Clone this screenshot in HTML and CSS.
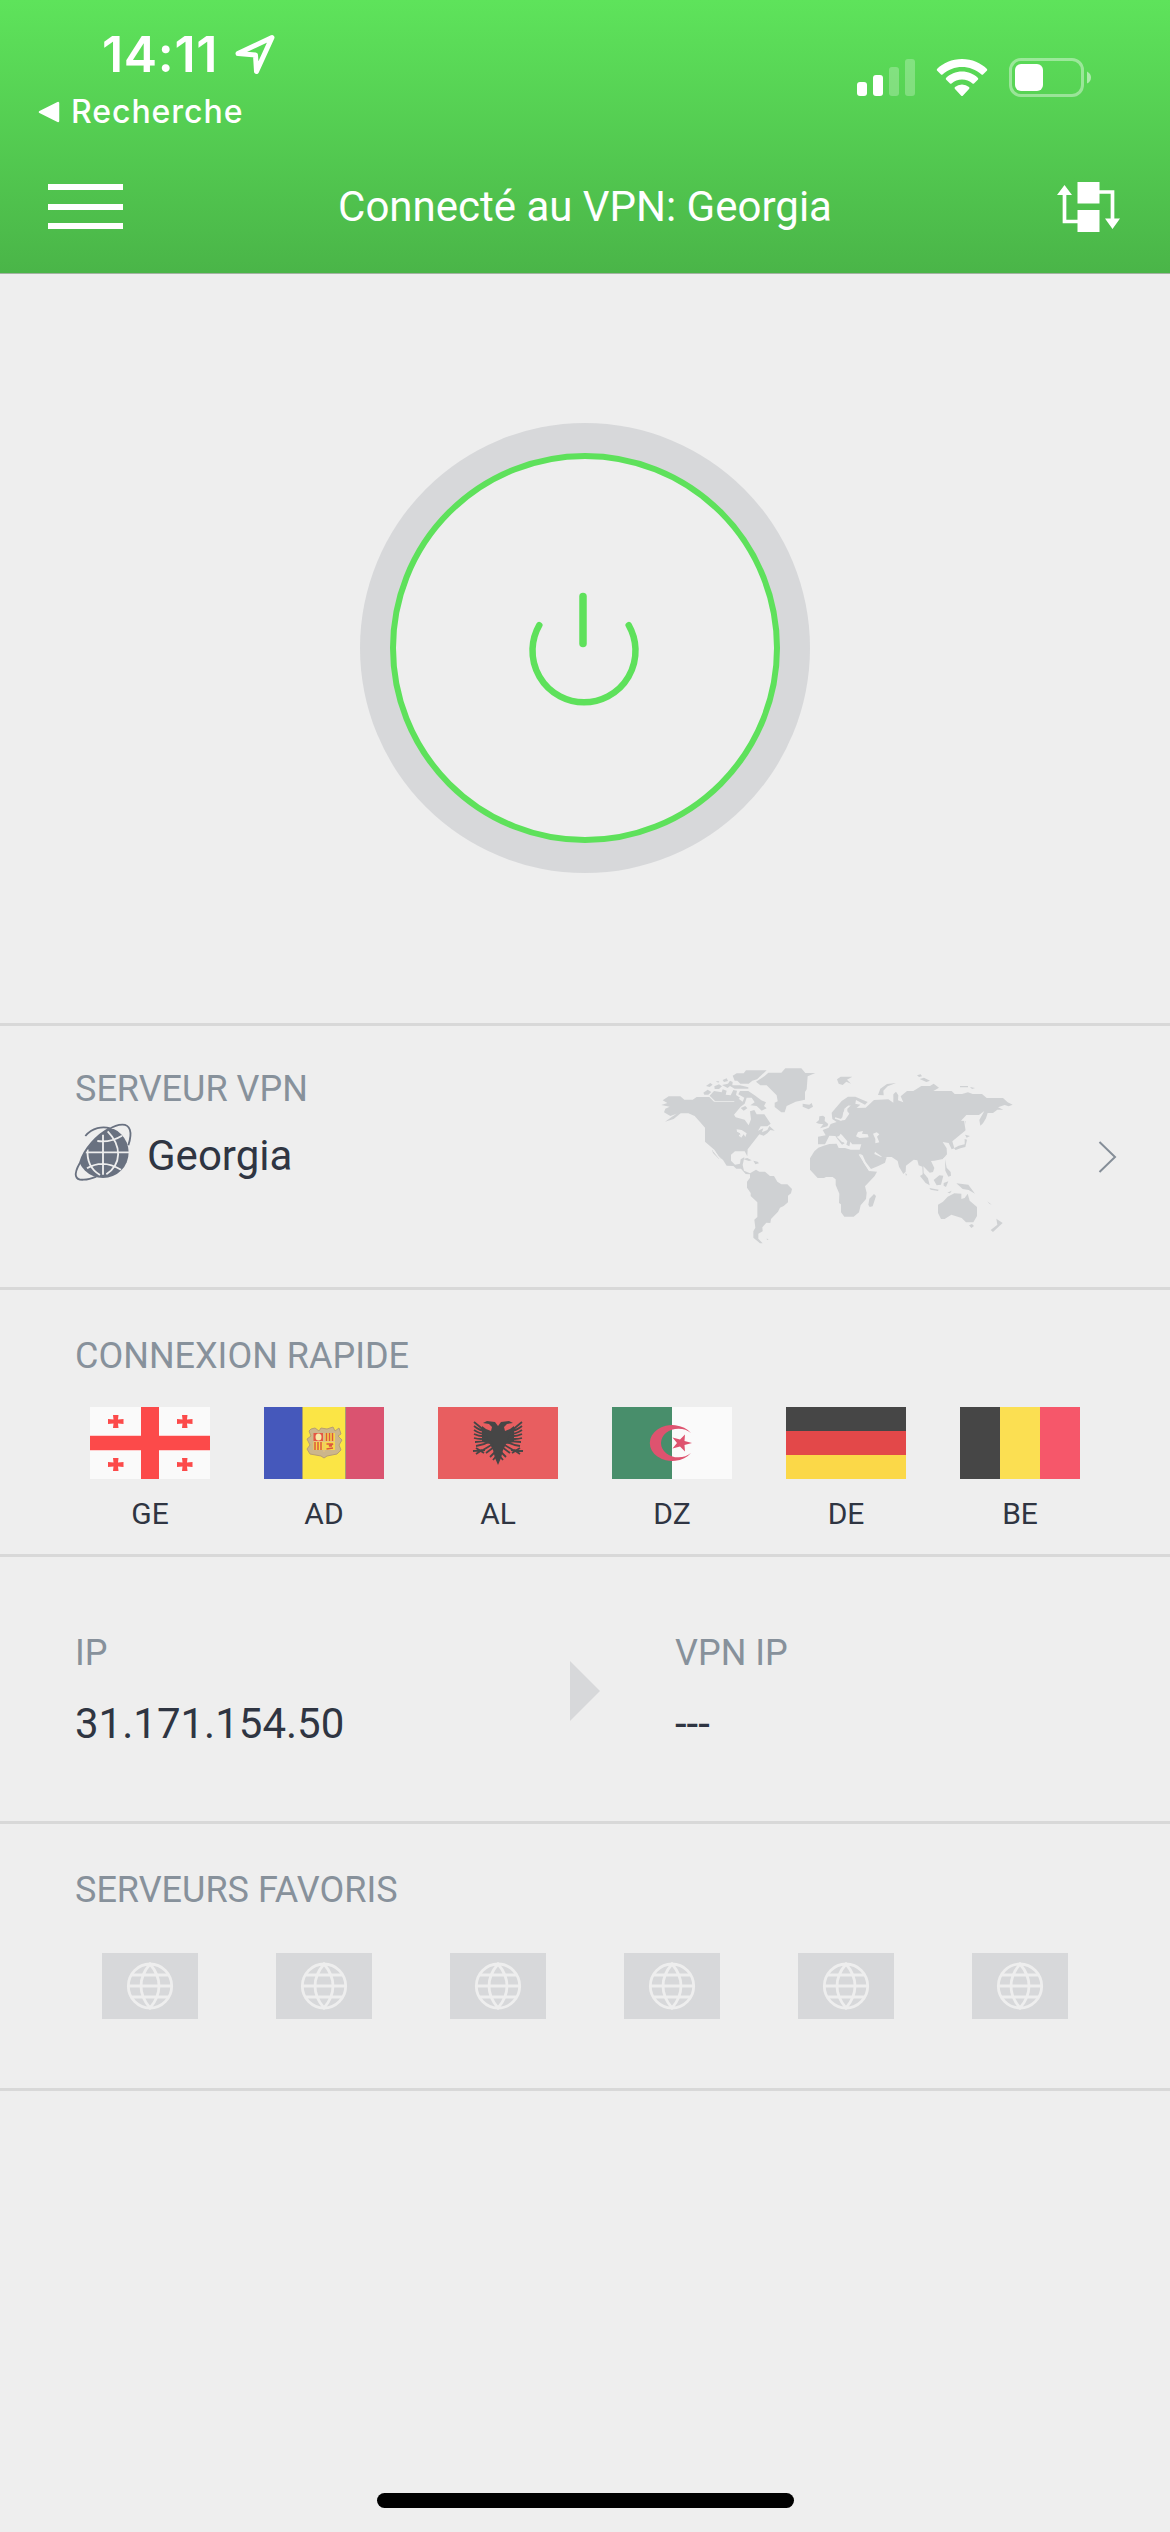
FILE: index.html
```html
<!DOCTYPE html>
<html lang="fr">
<head>
<meta charset="utf-8">
<title>VPN</title>
<link rel="stylesheet" href="styles.css">
</head>
<body>
<svg class="defs" width="0" height="0" aria-hidden="true">
  <symbol id="globe" viewBox="0 0 48 48">
    <g fill="none" stroke="#eee" stroke-width="2.8">
      <ellipse cx="24" cy="24" rx="21.7" ry="22"/>
      <path d="M2 24H46M6 13H42M6 35H42M24 2C12 16 12 32 24 46C36 32 36 16 24 2Z"/>
    </g>
  </symbol>
</svg>
<header class="header">
  <div class="status">
    <div class="status-left">
      <div class="clock"><span class="time">14:11</span>
        <svg class="location" width="42" height="42" viewBox="0 0 42 42"><path d="M4 19.500L38 3.500L22.500 37.500L21.500 21Z" fill="none" stroke="#fff" stroke-width="5" stroke-linejoin="round"/></svg>
      </div>
      <div class="back">
        <svg width="22" height="22" viewBox="0 0 22 22"><path d="M2 11L20 2V20Z" fill="#fff" stroke="#fff" stroke-width="2.500" stroke-linejoin="round"/></svg>
        <span>Recherche</span>
      </div>
    </div>
    <div class="status-right">
      <svg width="58" height="38" viewBox="0 0 58 38" fill="#fff"><rect y="23" width="10" height="14" rx="3"/><rect x="16" y="16" width="10" height="21" rx="3"/><rect x="32" y="8" width="10" height="29" rx="3" opacity=".25"/><rect x="48" width="10" height="37" rx="3" opacity=".25"/></svg>
      <svg width="52" height="38" viewBox="0 0 52 38" fill="#fff"><path d="M26 0C36 0 45 4 51 10Q51.500 11 51 11.500L47 15.500Q46.500 16 45.500 15.500C40 10.500 33 8 26 8S12 10.500 6.500 15.500Q5.500 16 5 15.500L1 11.500Q.5 11 1 10C7 4 16 0 26 0Z"/><path d="M26 12.500C32 12.500 38 15 42 19Q42.500 20 42 20.500L38 24.500Q37 25 36.500 24.500C33.500 22 30 20.500 26 20.500S18.500 22 15.500 24.500Q15 25 14 24.500L10 20.500Q9.500 20 10 19C14 15 20 12.500 26 12.500Z"/><path d="M26 25.500Q30 25.500 33 28Q34 29 33 30L27 36.500Q26 37.500 25 36.500L19 30Q18 29 19 28Q22 25.500 26 25.500Z"/></svg>
      <svg width="83" height="40" viewBox="0 0 83 40"><rect x="1.500" y="0.500" width="72" height="36" rx="10.500" fill="none" stroke="#fff" stroke-opacity=".4" stroke-width="3"/><rect x="6" y="5" width="28" height="27" rx="6" fill="#fff"/><path d="M78 12.500Q82 14.500 82 18.500T78 24.500Z" fill="#fff" opacity=".5"/></svg>
    </div>
  </div>
  <div class="navbar">
    <div class="menu"><i></i><i></i><i></i></div>
    <h1 class="title">Connecté au VPN: Georgia</h1>
    <svg width="63" height="50" viewBox="0 0 63 50" fill="#fff"><path d="M20.500 0H42.500V21.500H20.500ZM20.500 28H42.500V50H20.500ZM0 13L7.500 3L15 13ZM48 36.500H63L55.500 47Z"/><path d="M42 10H55.500V38M21 39.500H7.500V12" fill="none" stroke="#fff" stroke-width="3.700"/></svg>
  </div>
</header>
<main>
  <section class="hero">
    <div class="power"><div class="power-inner">
      <svg width="114" height="120" viewBox="527 590 114 120" fill="none" stroke="#5ee15b" stroke-linecap="round"><path d="M583 596.500V643.500" stroke-width="7.500"/><path d="M539.300 625.200A51.500 51.500 0 1 0 628.700 625.200" stroke-width="6.500"/></svg>
    </div></div>
  </section>
  <section class="server">
    <div class="server-info">
      <h2 class="label">SERVEUR VPN</h2>
      <div class="server-name">
        <svg width="58" height="58" viewBox="0 0 174 174"><defs><clipPath id="ball"><path d="M15 116C18 105 24 93 32 81C46 60 72 30 100 14H174V174H20Z"/></clipPath></defs>
          <circle cx="84" cy="85" r="77" fill="#697180" clip-path="url(#ball)"/>
          <g fill="none" stroke="#eee" stroke-width="5.500"><path d="M84 32V152M32 85H164M67 51Q107 56 141 35M36 133Q84 104 138 137M98 22C141 66 140 120 94 151M38 76C35 112 50 138 75 153"/></g>
          <path d="M31 36C52 11 82 6 106 13M15 116C-6 152 0 169 26 167C40 167 52 163 64 158M102 16C118 5 132 2 142 2C164 2 174 22 160 64M15 116C26 76 66 32 104 13" fill="none" stroke="#697180" stroke-width="5.500"/>
        </svg>
        <span class="value">Georgia</span>
      </div>
    </div>
    <svg class="map" width="400" height="210" viewBox="0 0 1200 630">
      <g fill="#cfd1d3">
        <path d="M64 165L82 159L68 151L86 139H121L133 149H158L170 141H208L222 155H282L292 143L308 155L313 143L295 133L300 123H325L346 137L364 151L378 157L372 168L380 175L365 182L350 168L331 166L344 157L335 143H320L314 161L302 170L282 194L287 202L314 209L326 226L333 208L330 184L343 180L350 193H373L392 221L382 229H362L354 242L370 235L366 247L382 240L388 228L404 242L391 240L382 250L371 257L358 253L340 276L323 298L322 319L314 304H285L273 314V332L285 344L300 341L302 328L313 322L308 345L312 362L330 370L348 359L358 365H375L390 378H402L412 395L424 403H442L456 417L453 430L444 437V457L431 468L420 473L414 485L393 507L391 519L379 518L367 532L368 544L355 551V566L368 580H360L340 563V544L346 533L343 509L352 501V457L332 438V429L321 413V395L330 383V373L317 372L303 356H289L280 348L260 347L249 330L236 319L223 299L195 275V233L180 216L164 198L145 190H122L101 207L75 215L96 200L110 191L91 198L72 187L76 176L89 170Z"/>
        <path d="M278 77L290 70H311L318 61H380L351 88L337 92L326 101H301L292 92H284ZM348 95L373 79L385 68H424L436 55H484L496 69H526L503 79L500 118L495 126V149L467 155L440 168L434 187H424L404 171V158L413 154L410 136L380 106H361Z"/>
        <path d="M190 128L203 119L214 126L205 134H193ZM198 108L211 99L218 104L209 111ZM209 137L222 123L245 127L248 118L260 122L257 134L272 136L280 120L291 122L288 135L300 143L288 153H225ZM223 109L237 103L246 109L237 117H224ZM227 94H238L235 98ZM248 90L260 85L264 93L252 96ZM246 105L264 101L270 92L278 96L277 106H300L325 112V116H284L270 108L263 114ZM302 174L316 168L322 175L311 182Z"/>
        <path d="M591 88L602 80H637L621 89L633 101L619 95L608 105L596 101ZM488 161L508 164L515 159L519 170L506 178L488 170ZM528 218L537 210L538 199L549 197L555 202L554 213L565 222L562 229L540 235L550 223L537 221ZM714 135L721 116L741 102L768 99L743 109L730 122L731 136ZM831 76L842 73L846 79L837 81ZM839 87L852 83L870 92L859 96ZM960 108H984V112H960ZM990 111L1005 114L996 117Z"/>
        <path d="M548 240L566 233L572 222L590 216L577 207L575 188L605 153L624 140H646L683 156L675 164L648 150L646 161L661 164L650 174L677 173L702 150L745 148L760 158V133L768 125L775 136L774 151L790 157L782 139L801 123H820L844 108H870L881 101L897 113L880 123H935L944 132H966L984 127L998 132H1026L1040 144H1089L1103 157L1118 164L1106 169L1094 165L1074 172L1090 179H1072L1059 189H1043L1038 205L1029 220L1021 227L1018 210L1033 183L1017 195H979L963 212L978 213V240L937 274L943 295L935 298L926 279L908 276L920 295L921 313L909 327L883 332L873 333L883 354L879 366L869 368L850 349L851 369L864 385L869 406L857 399L840 378L848 373L847 350L836 346L832 331L821 329L798 347L797 365L790 372L777 350L773 333L755 321H727L705 305L703 312L721 320L740 322L735 338L715 348L693 357L677 336L668 316L660 311L672 340L688 363L711 365L704 378L675 409L680 428L678 447L662 466L657 487L641 500H613L603 487V463L597 459L598 431L587 405V388L578 381H558L552 384H533L510 359V325L523 304L535 293L551 287L568 282L590 281L596 294L615 294L632 299H659L664 283H637L631 275L628 289L619 284L622 274L608 257L602 251L597 259L614 280L606 284L593 268L586 258L568 257L555 283H534V260L557 256Z"/>
        <path d="M685 464L688 446L702 432L708 438L698 469L689 471ZM796 370L801 373L798 378ZM881 390L898 376L910 377L903 404L890 406ZM911 399L925 394L918 411L911 407ZM868 414L896 419L894 423L872 419ZM922 428L935 422L930 430ZM915 328L920 353L932 366L933 377L925 380L916 362ZM949 400L985 404L1005 431L986 420L968 417ZM894 464L909 455L923 440L943 430L964 431L964 447L974 444L983 431L989 452L1011 471V498L1000 517H978L965 504L934 494L914 507H903L894 489ZM987 526L996 522L1002 528L994 534ZM1042 454L1055 464L1048 461ZM1069 506L1079 513L1088 519L1079 527L1059 546L1052 540L1072 524ZM942 295L956 287L974 283V267L981 269L976 291L961 295L947 300ZM975 254L990 258L980 263ZM340 332L353 335L357 340L346 343ZM309 327L322 324L335 331L327 333ZM379 566L386 567L382 570ZM216 299L242 326L237 327L219 309Z"/>
      </g>
      <g fill="none" stroke="#eee" stroke-width="4"><path d="M628 167L615 177L613 193L624 192M605 210L585 204M160 211L190 237M974 211L979 243M658 313L689 363M220 302L241 328M298 255L302 260M910 327L920 321"/></g>
      <g fill="#eee"><path d="M610 187L620 171L633 165L622 176V184L628 191L615 210L598 212L607 202ZM648 259L654 246L669 243L666 251L683 253L686 262L659 264ZM699 251L710 247L718 253L711 260L718 277L706 280L706 267ZM290 238L305 240L320 250L316 261L311 253L303 264L300 250L291 245ZM590 260L600 257L616 278L606 276Z"/></g>
    </svg>
    <svg class="chevron" width="20" height="34" viewBox="0 0 20 34"><path d="M1.500 2L17 17L1.500 32" fill="none" stroke="#858e98" stroke-width="2"/></svg>
  </section>
  <section class="quick">
    <h2 class="label">CONNEXION RAPIDE</h2>
    <div class="tiles">
      <div class="tile"><svg width="120" height="72" viewBox="0 0 120 72"><path fill="#fafafa" d="M0 0H120V72H0Z"/><path fill="#ffcfcf" d="M0 28H120V44H0Z"/><path fill="#fc4a4a" d="M51 0H69V29H120V43H69V72H51V43H0V29H51Z"/><path id="ge-cross" fill="#fc4a4a" d="M23 8H28.500L28 12.500L33.500 12V17L28 16.500L28.500 21H23L23.500 16.500L18 17V12L23.500 12.500Z"/><use href="#ge-cross" x="69"/><use href="#ge-cross" y="43"/><use href="#ge-cross" x="69" y="43"/></svg><span>GE</span></div>
      <div class="tile"><svg width="120" height="72" viewBox="0 0 120 72"><path fill="#4558bb" d="M0 0H38.500V72H0Z"/><path fill="#fbe545" d="M38.500 0H82V72H38.500Z"/><path fill="#da5370" d="M82 0H120V72H82Z"/><path stroke="#a89d70" d="M38.500 0V72M81.500 0V72"/><path fill="#ccb68b" stroke="#b79f72" d="M47 22L51 21L55 24L57 21L63 22L69 20L71 24L75 21L77 27L74 29L78 33L75 38L77 43L73 47L63 49L60 51L57 49L46 47L43 42L46 38L43 32L47 29L45 24Z"/><path fill="#e55643" d="M49.500 26H59V34H49.500Z"/><ellipse cx="54.500" cy="30" rx="3" ry="3.500" fill="#f8e9a7"/><path fill="#f6d84b" d="M61 26H71V43H49.500V35H61Z"/><path d="M62.500 26V34M65.500 26V34M68.500 26V34M51 35V43M54 35V43M57 35V43M62.500 37H69L65 39H68M62.500 42L69 41" stroke="#dc5740" stroke-width="1.500" fill="none"/><path d="M60 26V45M49.500 34.500H71" stroke="#e8c47f"/></svg><span>AD</span></div>
      <div class="tile"><svg width="120" height="72" viewBox="0 0 120 72"><path fill="#e85e60" d="M0 0H120V72H0Z"/><g id="eagle-half"><path fill="#464646" d="M60 19L57 15L49 14L45 16L51 17L54 20L53 24L48 22L44 19L44 35L52 37L55 43L57 51L60 58Z"/><path d="M36 15L47 24M36 19Q42 24 48 24M36 23Q42 27 48 27M36 27Q42 30 49 29M36 31Q43 33 50 31M37 35Q44 35 51 33M38 39Q46 38 53 34M45 43L55 37M48 46L56 40M52 50L58 44M35 44L47 43M38 41L46 46M38 47L44 43M55 53L60 47" stroke="#464646" stroke-width="1.800" fill="none"/></g><use href="#eagle-half" transform="translate(120 0) scale(-1 1)"/></svg><span>AL</span></div>
      <div class="tile"><svg width="120" height="72" viewBox="0 0 120 72"><path fill="#488e6b" d="M0 0H60V72H0Z"/><path fill="#fafafa" d="M60 0H120V72H60Z"/><path fill="#de536f" d="M79 26A22.500 18 0 1 0 79 46A17.500 14.300 0 1 1 79 26ZM80 36L72.500 38L73 44.500L68 39.500L60.500 41.500L65 36L60.500 30.500L68 32.500L73 27.500L72.500 34Z"/></svg><span>DZ</span></div>
      <div class="tile"><svg width="120" height="72" viewBox="0 0 120 72"><path fill="#464646" d="M0 0H120V24H0Z"/><path fill="#e34849" d="M0 24H120V48H0Z"/><path fill="#fbd848" d="M0 48H120V72H0Z"/></svg><span>DE</span></div>
      <div class="tile"><svg width="120" height="72" viewBox="0 0 120 72"><path fill="#464646" d="M0 0H40V72H0Z"/><path fill="#fbdf52" d="M40 0H80V72H40Z"/><path fill="#f6576a" d="M80 0H120V72H80Z"/></svg><span>BE</span></div>
    </div>
  </section>
  <section class="addresses">
    <div class="address"><h2 class="label">IP</h2><span class="value">31.171.154.50</span></div>
    <svg class="arrow" width="30" height="60" viewBox="0 0 30 60"><path d="M0 0L30 30L0 60Z" fill="#d7d8da"/></svg>
    <div class="address"><h2 class="label">VPN IP</h2><span class="value">---</span></div>
  </section>
  <section class="favorites">
    <h2 class="label">SERVEURS FAVORIS</h2>
    <div class="tiles">
      <div class="favorite"><svg width="48" height="48"><use href="#globe"/></svg></div>
      <div class="favorite"><svg width="48" height="48"><use href="#globe"/></svg></div>
      <div class="favorite"><svg width="48" height="48"><use href="#globe"/></svg></div>
      <div class="favorite"><svg width="48" height="48"><use href="#globe"/></svg></div>
      <div class="favorite"><svg width="48" height="48"><use href="#globe"/></svg></div>
      <div class="favorite"><svg width="48" height="48"><use href="#globe"/></svg></div>
    </div>
  </section>
</main>
<div class="home-indicator"></div>
</body>
</html>
```
FILE: styles.css
```css
* { box-sizing: border-box; }
body {
  margin: 0;
  width: 1170px;
  height: 2532px;
  display: flex;
  flex-direction: column;
  background: #eee;
  color: #2f3542;
  font-family: Roboto, sans-serif;
  overflow: hidden;
}
svg { display: block; flex: none; overflow: visible; }
.defs { position: absolute; }
h1, h2 { margin: 0; font-weight: 400; }

.header {
  height: 274px;
  color: #fff;
  background: linear-gradient(#5ee35b, #4ab548);
  border-bottom: 1px solid #a3b3a2;
}
.status {
  height: 141px;
  display: flex;
  justify-content: space-between;
  font-family: Inter, sans-serif;
}
.status-left { padding: 24px 0 0 38px; }
.clock {
  display: flex;
  gap: 17px;
  padding-left: 64px;
  height: 60px;
}
.time { font-size: 50px; line-height: 60px; font-weight: 600; width: 115px; white-space: nowrap; letter-spacing: 0.7px; }
.location { margin-top: 10px; }
.back {
  display: flex;
  align-items: center;
  gap: 11px;
  margin-top: 8px;
  font-size: 32px;
  line-height: 40px;
  font-weight: 500;
  letter-spacing: 0.95px;
}
.status-right { display: flex; gap: 21px; padding: 59px 78px 0 0; }
.navbar {
  height: 132px;
  display: grid;
  grid-template-columns: 75px 1fr 63px;
  align-items: start;
  padding: 41px 50px 0 48px;
}
.menu { display: grid; gap: 13.500px; padding-top: 2px; }
.menu i { height: 6px; background: #fff; }
.title { font-size: 42px; line-height: 49px; text-align: center; padding-right: 10px; }

section { border-bottom: 3px solid #d8d8d8; }
.label { font-size: 36px; line-height: 42px; color: #87919b; }
.value { font-size: 42px; line-height: 49px; }

.hero { height: 752px; display: grid; justify-content: center; align-content: start; padding-top: 149px; }
.power {
  width: 450px;
  height: 450px;
  padding: 30px;
  border-radius: 50%;
  background: #d7d8da;
}
.power-inner {
  height: 390px;
  display: grid;
  place-items: center;
  border: 6px solid #5ee15b;
  border-radius: 50%;
  background: #eee;
  padding: 4px 2px 0 0;
}

.server { height: 264px; display: flex; padding-left: 75px; }
.server-info { width: 565px; padding-top: 42px; }
.server-name { display: flex; gap: 14px; margin-top: 14px; }
.server-name .value { padding-top: 7px; }
.map { margin-top: 24px; }
.chevron { margin: 114px 0 0 58px; }

.quick { height: 267px; padding: 45px 63px 0; }
.quick .label, .favorites .label { padding-left: 12px; }
.tiles { display: grid; grid-template-columns: repeat(6, 174px); }
.quick .tiles { padding-top: 30px; }
.tile {
  display: grid;
  justify-items: center;
  gap: 17px;
  font-size: 30px;
  line-height: 35px;
}
.addresses { height: 267px; display: flex; padding: 75px 0 0 75px; }
.address { display: grid; align-content: start; gap: 25px; width: 495px; flex: none; }
.arrow { margin: 29px 75px 0 0; }

.favorites { height: 267px; padding: 45px 63px 0; }
.favorites .tiles { padding-top: 42px; justify-items: center; }
.favorite {
  width: 96px;
  height: 66px;
  display: grid;
  place-items: center;
  background: #d7d8da;
}
.home-indicator {
  width: 417px;
  height: 15px;
  margin: auto auto 24px;
  border-radius: 8px;
  background: #000;
}
```
